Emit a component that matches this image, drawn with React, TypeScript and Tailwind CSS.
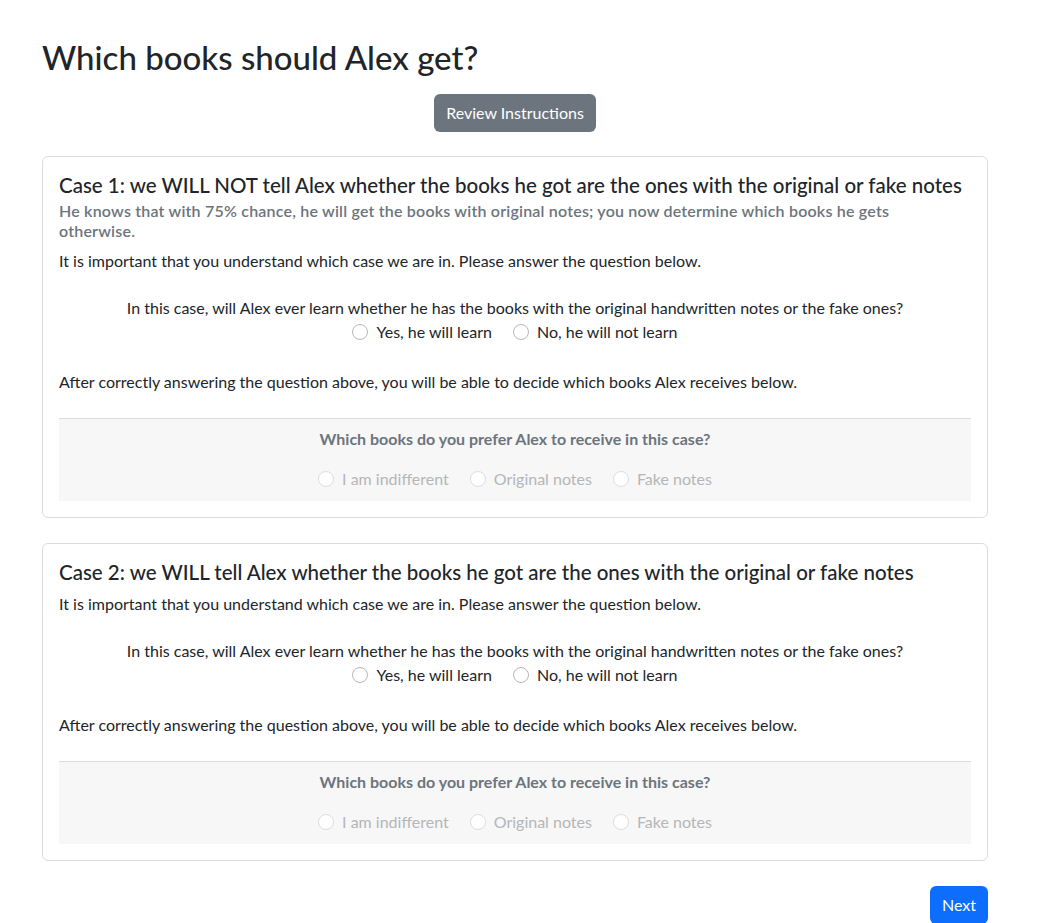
import React from "react";

function Radio({ label, disabled }: { label: string; disabled?: boolean }) {
  return (
    <label className={`inline-flex items-center gap-2 ${disabled ? "text-[#b4b6b8]" : ""}`}>
      <span
        className={`h-4 w-4 rounded-full border bg-white ${disabled ? "border-[#dedede]" : "border-[#b5b8bb]"}`}
      />
      <span>{label}</span>
    </label>
  );
}

function CaseCard({ title, subtitle }: { title: string; subtitle?: string }) {
  return (
    <div className="rounded-[6px] border border-[#dcdcdc] p-4">
      <h5 className="mb-2 text-[20.5px] font-medium leading-[24px]">{title}</h5>
      {subtitle && (
        <h6 className="-mt-1 mb-2 max-w-[860px] text-[16px] font-semibold leading-[20px] tracking-[0.2px] text-[#6c757d]">
          {subtitle}
        </h6>
      )}
      <p>It is important that you understand which case we are in. Please answer the question below.</p>
      <div className="mt-[23px] text-center">
        <p>
          In this case, will Alex ever learn whether he has the books with the original handwritten notes or the fake
          ones?
        </p>
        <div className="flex justify-center gap-[21px]">
          <Radio label="Yes, he will learn" />
          <Radio label="No, he will not learn" />
        </div>
      </div>
      <p className="mt-[26px]">
        After correctly answering the question above, you will be able to decide which books Alex receives below.
      </p>
      <div className="mt-6 border-t border-[#dcdcdc] bg-[#f7f7f7] pb-[10px] pt-2 text-center">
        <p className="font-bold text-[#6c757d]">Which books do you prefer Alex to receive in this case?</p>
        <div className="mt-4 flex justify-center gap-[21px]">
          <Radio label="I am indifferent" disabled />
          <Radio label="Original notes" disabled />
          <Radio label="Fake notes" disabled />
        </div>
      </div>
    </div>
  );
}

export default function App() {
  return (
    <div className="min-h-screen bg-white font-['Lato',sans-serif] text-[16px] leading-[24px] text-[#212529]">
      <div className="ml-[42px] w-[946px] pt-[35px]">
        <h1 className="text-[33px] font-medium leading-[45px]">Which books should Alex get?</h1>
        <div className="mt-[14px] flex justify-center">
          <button className="rounded-[6px] bg-[#6c757d] px-3 py-[7px] text-white">Review Instructions</button>
        </div>
        <div className="mt-[24px] flex flex-col gap-[25px]">
          <CaseCard
            title="Case 1: we WILL NOT tell Alex whether the books he got are the ones with the original or fake notes"
            subtitle="He knows that with 75% chance, he will get the books with original notes; you now determine which books he gets otherwise."
          />
          <CaseCard title="Case 2: we WILL tell Alex whether the books he got are the ones with the original or fake notes" />
        </div>
        <div className="mt-[25px] flex justify-end">
          <button className="rounded-[6px] bg-[#0d6efd] px-3 py-[7px] text-white">Next</button>
        </div>
      </div>
    </div>
  );
}
